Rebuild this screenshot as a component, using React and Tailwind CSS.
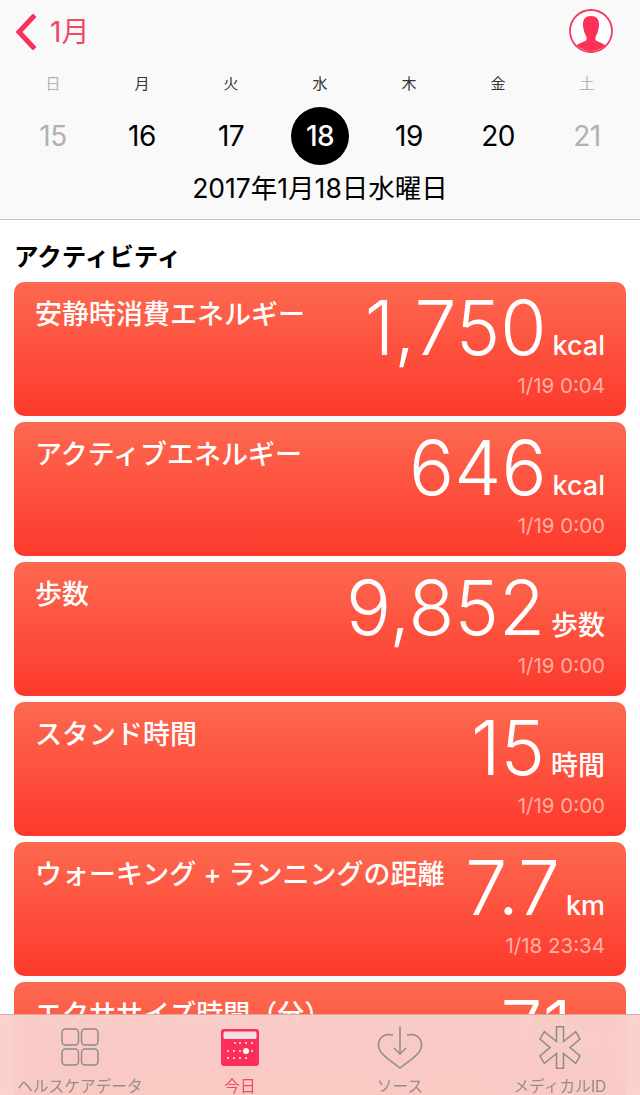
import React from 'react';

const FONT = { fontFamily: 'Inter, "Noto Sans CJK JP", sans-serif' };

const week = [
  { label: '日', day: '15', off: true },
  { label: '月', day: '16' },
  { label: '火', day: '17' },
  { label: '水', day: '18', active: true },
  { label: '木', day: '19' },
  { label: '金', day: '20' },
  { label: '土', day: '21', off: true },
];

const cards = [
  { title: '安静時消費エネルギー', value: '1,750', unit: 'kcal', time: '1/19 0:04' },
  { title: 'アクティブエネルギー', value: '646', unit: 'kcal', time: '1/19 0:00' },
  { title: '歩数', value: '9,852', unit: '歩数', time: '1/19 0:00' },
  { title: 'スタンド時間', value: '15', unit: '時間', time: '1/19 0:00' },
  { title: 'ウォーキング + ランニングの距離', value: '7.7', unit: 'km', time: '1/18 23:34' },
  { title: 'エクササイズ時間（分）', value: '71', unit: '分', time: '1/18 23:34' },
];

const calendarDots = [
  { y: 14, xs: [14, 19, 25, 31] },
  { y: 22, xs: [7, 13, 19, 31] },
  { y: 29, xs: [7, 13, 19, 25] },
];

function Header() {
  return (
    <div className="h-[220px] bg-[#f9f9f9] border-b border-[#c4c4c4] shrink-0">
      <div className="flex items-center justify-between h-[64px] pl-[14px] pr-[27px]">
        <div className="flex items-center gap-[13px]">
          <svg width="23" height="36" viewBox="0 0 23 36" fill="none">
            <path d="M19 3 L5 18 L19 33" stroke="#fb3158" strokeWidth="5" strokeLinecap="square" />
          </svg>
          <span className="text-[28px] leading-none text-[#f0476a]">1月</span>
        </div>
        <svg className="mb-[3px]" width="44" height="44" viewBox="0 0 44 44">
          <defs>
            <clipPath id="avatar"><circle cx="22" cy="22" r="20" /></clipPath>
          </defs>
          <circle cx="22" cy="22" r="21" fill="#fff" stroke="#f03a62" strokeWidth="1.800" />
          <g clipPath="url(#avatar)" fill="#fb3158">
            <path d="M22 7 C16 7 13.500 11 14 17 C14.500 22 16.500 26 17.500 28 L17.500 31 C14 33.500 8 35 5 38 L5 44 L39 44 L39 38 C36 35 30 33.500 26.500 31 L26.500 28 C27.500 26 29.500 22 30 17 C30.500 11 28 7 22 7 Z" />
          </g>
        </svg>
      </div>
      <div className="grid grid-cols-7 px-[8.5px] pt-[5px]">
        {week.map(d => (
          <div key={d.label} className="flex flex-col items-center">
            <span className={`h-[30px] flex items-center text-[15px] ${d.off ? 'text-[#b4b4b4]' : 'text-[#333]'}`}>{d.label}</span>
            <span className={`mt-[8px] w-[58px] h-[58px] rounded-full flex items-center justify-center text-[28px] tracking-[-0.5px] ${d.active ? 'bg-black text-white font-medium' : d.off ? 'text-[#b0b0b0]' : 'text-black'}`}>
              {d.day}
            </span>
          </div>
        ))}
      </div>
      <p className="text-center text-[26.500px] leading-[30px] text-black mt-[8px]">2017年1月18日水曜日</p>
    </div>
  );
}

function Card({ title, value, unit, time }) {
  return (
    <div className="relative h-[134px] shrink-0 rounded-[10px] bg-linear-to-b/srgb from-[#fd6950] to-[#fd392c] px-[21px] text-white overflow-hidden">
      <div className="flex items-start justify-between">
        <p className="text-[27px] leading-[30px] font-medium mt-[18px] whitespace-nowrap">{title}</p>
        <div className="flex items-baseline gap-[6px] h-[92px] whitespace-nowrap">
          <span className="text-[75px] leading-[92px] font-light">{value}</span>
          <span className="text-[27px] font-medium leading-none">{unit}</span>
        </div>
      </div>
      <p className="text-right text-[20.500px] leading-[24px] text-[#ffb0a4]">{time}</p>
    </div>
  );
}

function TabBar() {
  return (
    <div className="absolute bottom-0 left-0 right-0 h-[81px] bg-[#f9d1cc]/95 backdrop-blur-md border-t border-[#d9a8a2] grid grid-cols-4">
      <div className="flex flex-col items-center">
        <div className="mt-[10px] h-[44px] flex items-center">
          <svg width="38" height="38" viewBox="0 0 38 38" fill="none" stroke="#8e8b8b" strokeWidth="1.500">
            <rect x="1" y="1" width="16.500" height="16" rx="3.500" />
            <rect x="20.500" y="1" width="16.500" height="16" rx="3.500" />
            <rect x="1" y="21" width="16.500" height="16" rx="3.500" />
            <rect x="20.500" y="21" width="16.500" height="16" rx="3.500" />
          </svg>
        </div>
        <span className="text-[15.700px] leading-[16px] mt-[10px] whitespace-nowrap text-[#958c8c]">ヘルスケアデータ</span>
      </div>
      <div className="flex flex-col items-center">
        <div className="mt-[10px] h-[44px] flex items-center">
          <svg width="38" height="37" viewBox="0 0 38 37">
            <rect x="0" y="0" width="38" height="37" rx="3" fill="#fb2f5a" />
            <rect x="2.500" y="2.500" width="33" height="7.500" rx="1.500" fill="#fbdcdf" />
            {calendarDots.map(row => row.xs.map(x => (
              <circle key={`${x}-${row.y}`} cx={x} cy={row.y} r="1" fill="#fff" opacity="0.9" />
            )))}
            <circle cx="25" cy="22" r="3" fill="#fff" />
          </svg>
        </div>
        <span className="text-[15.700px] leading-[16px] mt-[10px] text-[#f0476a]">今日</span>
      </div>
      <div className="flex flex-col items-center">
        <div className="mt-[10px] h-[44px] flex items-center">
          <svg width="46" height="43" viewBox="0 0 46 43" fill="none" stroke="#8e8b8b" strokeWidth="1.500">
            <path d="M15.500 9 C7 7 1.500 12 1.500 19 C1.500 28 13 34 23 42 C33 34 44.500 28 44.500 19 C44.500 12 39 7 30.500 9" strokeLinecap="round" />
            <path d="M23 0.500 V28 M17 22 L23 28 L29 22" />
          </svg>
        </div>
        <span className="text-[15.700px] leading-[16px] mt-[10px] text-[#958c8c]">ソース</span>
      </div>
      <div className="flex flex-col items-center">
        <div className="mt-[10px] h-[44px] flex items-center">
          <svg width="42" height="43" viewBox="0 0 42 43" fill="none" stroke="#8e8b8b" strokeWidth="1.500">
            <path d="M17.500 0.750 H24.500 V15.500 L36.700 5.700 L41 13 L31 21.500 L41 30 L36.700 37.300 L24.500 27.500 V42.250 H17.500 V27.500 L5.300 37.300 L1 30 L11 21.500 L1 13 L5.300 5.700 L17.500 15.500 Z" />
          </svg>
        </div>
        <span className="text-[15.700px] leading-[16px] mt-[10px] whitespace-nowrap text-[#958c8c]">メディカルID</span>
      </div>
    </div>
  );
}

export default function App() {
  return (
    <div className="relative w-[640px] h-[1095px] overflow-hidden bg-white flex flex-col" style={FONT}>
      <Header />
      <h2 className="text-[24.500px] leading-[28px] font-semibold text-black pl-[14px] mt-[23px] mb-[11px] shrink-0">アクティビティ</h2>
      <div className="flex flex-col gap-[6px] px-[14px]">
        {cards.map(c => <Card key={c.title} {...c} />)}
      </div>
      <TabBar />
    </div>
  );
}
